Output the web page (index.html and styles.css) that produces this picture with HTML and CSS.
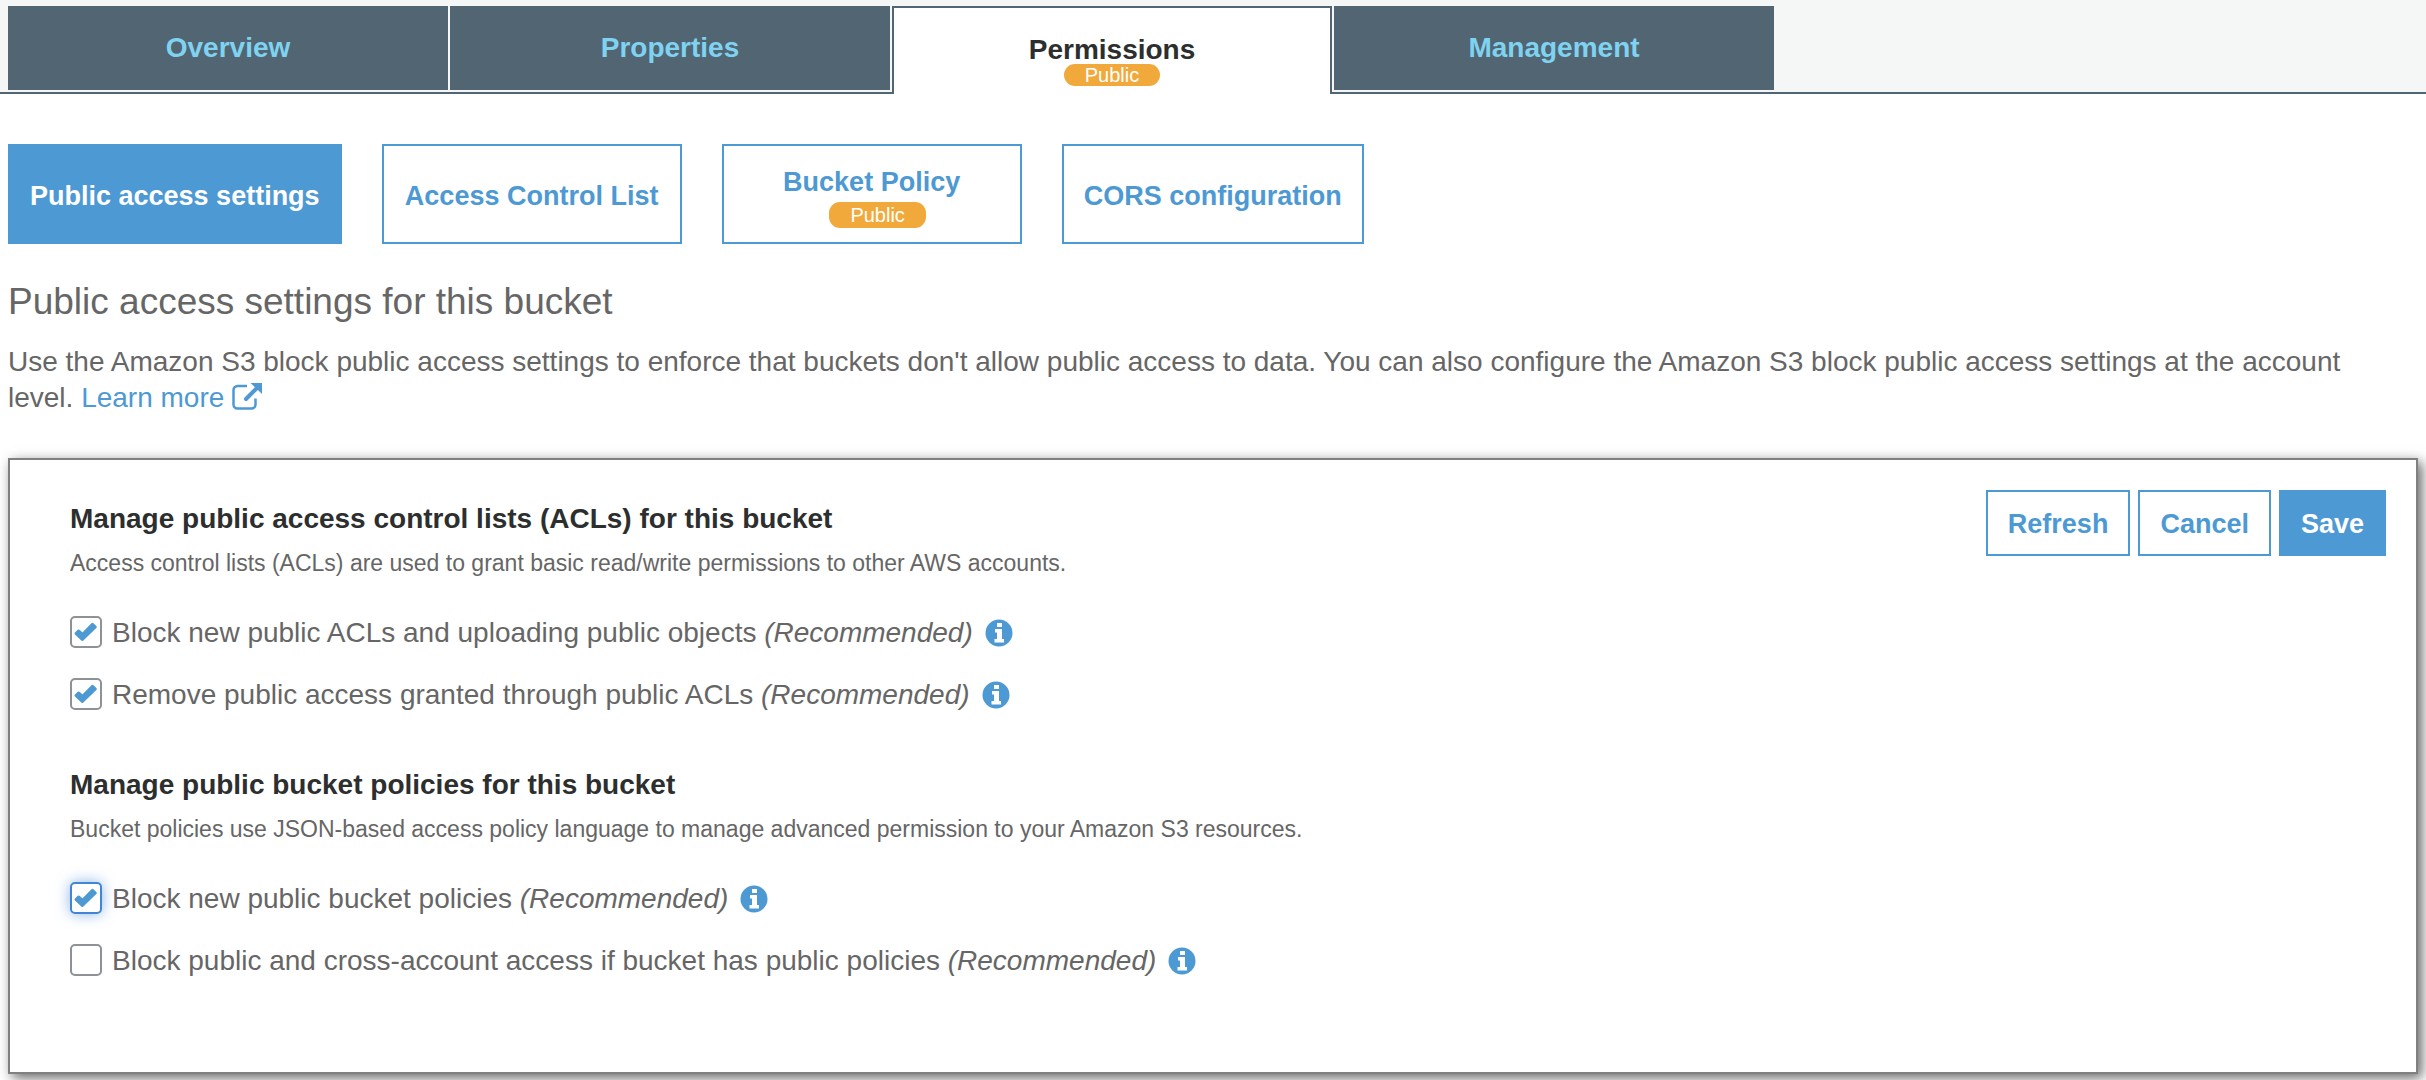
FILE: index.html
```html
<!DOCTYPE html>
<html lang="en">
<head>
  <meta charset="UTF-8" />
  <meta name="viewport" content="width=device-width, initial-scale=1.0" />
  <title>S3 bucket permissions</title>
  <link rel="stylesheet" href="styles.css">
</head>
<body>

  <!-- shared icons -->
  <svg class="sprite" aria-hidden="true">
    <symbol id="icon-check" viewBox="0 0 32 32">
      <path d="M6 17.500 L8.500 15 L12.500 18.500 L22.500 8.300 L25.300 11 L12.300 23.500 Z" />
    </symbol>
    <symbol id="icon-info" viewBox="0 0 28 28">
      <circle cx="14" cy="14" r="13.5" />
      <path fill="#fff" d="M12 4h5v4h-5zM10 10h7v10h2v3.500h-9.500v-3.500h2.500v-6.500h-2z" />
    </symbol>
    <symbol id="icon-external" viewBox="0 0 30 28">
      <path fill="none" stroke="currentColor" stroke-width="2.500" d="M15 4H5.500a4 4 0 0 0-4 4v14.500a4 4 0 0 0 4 4h14a4 4 0 0 0 4-4v-6" />
      <path fill="none" stroke="currentColor" stroke-width="4" stroke-linecap="round" d="M14 17L25 6" />
      <path fill="currentColor" d="M18.500 1h11.500v11z" />
    </symbol>
  </svg>

  <nav class="tabs">
    <a class="tab" href="#">Overview</a>
    <a class="tab" href="#">Properties</a>
    <a class="tab active" href="#">Permissions <span class="badge">Public</span></a>
    <a class="tab" href="#">Management</a>
  </nav>

  <main>
    <div class="subtabs">
      <button class="subtab selected" type="button">Public access settings</button>
      <button class="subtab" type="button">Access Control List</button>
      <button class="subtab" type="button">Bucket Policy <span class="badge">Public</span></button>
      <button class="subtab" type="button">CORS configuration</button>
    </div>

    <h1>Public access settings for this bucket</h1>
    <p class="intro">Use the Amazon S3 block public access settings to enforce that buckets don't allow public access to data. You can also configure the Amazon S3 block public access settings at the account level. <a href="#">Learn more <svg class="external"><use href="#icon-external" /></svg></a></p>

    <form class="panel">
      <div class="settings">
        <section>
          <h2>Manage public access control lists (ACLs) for this bucket</h2>
          <p class="hint">Access control lists (ACLs) are used to grant basic read/write permissions to other AWS accounts.</p>
          <div class="option">
            <span class="check"><input type="checkbox" id="block-acls" checked><svg><use href="#icon-check" /></svg></span>
            <label for="block-acls">Block new public ACLs and uploading public objects <em>(Recommended)</em></label>
            <svg class="info"><use href="#icon-info" /></svg>
          </div>
          <div class="option">
            <span class="check"><input type="checkbox" id="remove-acls" checked><svg><use href="#icon-check" /></svg></span>
            <label for="remove-acls">Remove public access granted through public ACLs <em>(Recommended)</em></label>
            <svg class="info"><use href="#icon-info" /></svg>
          </div>
        </section>

        <section>
          <h2>Manage public bucket policies for this bucket</h2>
          <p class="hint">Bucket policies use JSON-based access policy language to manage advanced permission to your Amazon S3 resources.</p>
          <div class="option">
            <span class="check focused"><input type="checkbox" id="block-policies" checked><svg><use href="#icon-check" /></svg></span>
            <label for="block-policies">Block new public bucket policies <em>(Recommended)</em></label>
            <svg class="info"><use href="#icon-info" /></svg>
          </div>
          <div class="option">
            <span class="check"><input type="checkbox" id="block-cross"><svg><use href="#icon-check" /></svg></span>
            <label for="block-cross">Block public and cross-account access if bucket has public policies <em>(Recommended)</em></label>
            <svg class="info"><use href="#icon-info" /></svg>
          </div>
        </section>
      </div>

      <div class="actions">
        <button class="btn" type="button">Refresh</button>
        <button class="btn" type="button">Cancel</button>
        <button class="btn primary" type="button">Save</button>
      </div>
    </form>
  </main>

</body>
</html>
```
FILE: styles.css
```css
* {
  box-sizing: border-box;
}

body {
  margin: 0;
  background-color: #fff;
  color: #666;
  font-family: "Liberation Sans", Arial, sans-serif;
  font-size: 28px;
  line-height: 36px;
}

h1, h2, p {
  margin: 0;
}

a {
  color: #4d99d3;
  text-decoration: none;
}

button {
  font-family: inherit;
  font-size: 27px;
  line-height: inherit;
  cursor: pointer;
}

.sprite {
  display: none;
}

/* top tabs */
.tabs {
  display: flex;
  gap: 2px;
  padding: 6px 8px 0;
  border-bottom: 2px solid #526573;
  background-color: #f4f7f6;
}

.tab {
  display: flex;
  flex: 0 1 440px;
  flex-direction: column;
  align-items: center;
  justify-content: center;
  height: 84px;
  margin-bottom: 2px;
  background-color: #526573;
  color: #7fd3f0;
  font-weight: bold;
}

.tab.active {
  height: 88px;
  margin-bottom: -2px;
  padding-top: 20px;
  border: 2px solid #526573;
  border-bottom: 0;
  background-color: #fff;
  color: #2d2f2f;
  line-height: 28px;
}

.badge {
  padding: 0 21px;
  border-radius: 11px;
  background-color: #f2a93b;
  color: #fff;
  font-size: 20px;
  font-weight: normal;
  line-height: 22px;
}

main {
  padding: 50px 8px 6px;
}

/* second row of tabs */
.subtabs {
  display: flex;
  gap: 40px;
}

.subtab {
  display: flex;
  flex-direction: column;
  align-items: center;
  justify-content: center;
  min-width: 300px;
  height: 100px;
  padding: 4px 20px 0;
  border: 2px solid #4d99d3;
  background-color: #fff;
  color: #4d99d3;
  font-weight: bold;
}

.subtab .badge {
  margin: 2px 0 0 12px;
  line-height: 26px;
}

.subtab.selected {
  background-color: #4d99d3;
  color: #fff;
}

h1 {
  margin-top: 36px;
  font-size: 37px;
  font-weight: normal;
  line-height: 44px;
}

.intro {
  margin-top: 20px;
  padding-right: 24px;
}

.external {
  width: 30px;
  height: 28px;
  vertical-align: -3px;
}

/* settings panel */
.panel {
  display: flex;
  justify-content: space-between;
  align-items: flex-start;
  margin-top: 42px;
  padding: 30px 30px 96px 60px;
  border: 2px solid #808080;
  box-shadow: 4px 4px 12px rgba(0, 0, 0, 0.6);
}

.settings {
  padding-top: 11px;
}

section + section {
  margin-top: 57px;
}

h2 {
  color: #2d2f2f;
  font-size: 28px;
  line-height: 36px;
}

.hint {
  margin: 8px 0 35px;
  font-size: 23px;
}

.option {
  display: flex;
  align-items: center;
  height: 32px;
}

.option + .option {
  margin-top: 30px;
}

.option label {
  padding-top: 2px;
}

.check {
  display: grid;
  width: 32px;
  height: 32px;
  margin-right: 10px;
}

.check input,
.check svg {
  grid-area: 1 / 1;
  width: 32px;
  height: 32px;
  margin: 0;
}

.check input {
  appearance: none;
  border: 2px solid #8c9296;
  border-radius: 5px;
  background-color: #fff;
}

.check svg {
  display: none;
  fill: #4d99d3;
  stroke: #4d99d3;
  stroke-linejoin: round;
  stroke-width: 3px;
  pointer-events: none;
}

.check input:checked + svg {
  display: block;
}

.check.focused input {
  border-color: #4285d6;
  box-shadow: 0 0 14px rgba(66, 133, 214, 0.6);
}

.info {
  width: 28px;
  height: 28px;
  margin: 2px 0 0 12px;
  fill: #4d99d3;
}

.actions {
  display: flex;
  gap: 8px;
}

.btn {
  height: 66px;
  padding: 2px 20px 0;
  border: 2px solid #4d99d3;
  background-color: #fff;
  color: #4d99d3;
  font-weight: bold;
}

.btn.primary {
  background-color: #4d99d3;
  color: #fff;
}
```
